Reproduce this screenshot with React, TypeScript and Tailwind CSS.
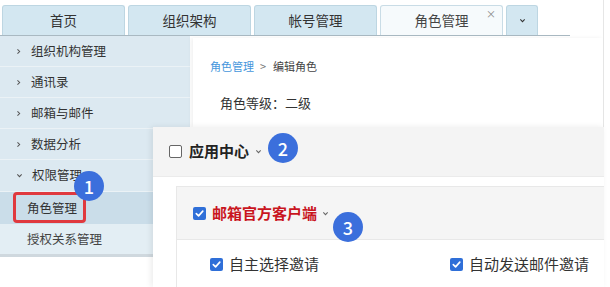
import React from "react";

const Chev = ({ down = false, cls = "" }: { down?: boolean; cls?: string }) => (
  <svg width="7" height="7" viewBox="0 0 8 8" className={cls}>
    {down ? (
      <path d="M1.5 2.8 L4 5.3 L6.5 2.8" fill="none" stroke="currentColor" strokeWidth="1.2" />
    ) : (
      <path d="M2.8 1.5 L5.3 4 L2.8 6.5" fill="none" stroke="currentColor" strokeWidth="1.2" />
    )}
  </svg>
);

const Checked = () => (
  <span className="w-[13px] h-[13px] rounded-[2px] bg-[#2f6fd8] flex items-center justify-center shrink-0">
    <svg width="11" height="11" viewBox="0 0 12 12">
      <path d="M2.5 6.2 L5 8.6 L9.6 3.4" fill="none" stroke="white" strokeWidth="1.8" strokeLinecap="round" strokeLinejoin="round" />
    </svg>
  </span>
);

const Badge = ({ n, cls }: { n: string; cls: string }) => (
  <div
    className={
      "absolute w-[30px] h-[30px] rounded-full bg-[#3b6fdc] text-white text-[18px] font-medium flex items-center justify-center " +
      cls
    }
  >
    {n}
  </div>
);

export default function App() {
  const tabs = ["首页", "组织架构", "帐号管理"];
  const side = ["组织机构管理", "通讯录", "邮箱与邮件", "数据分析"];
  return (
    <div
      className="relative w-[610px] h-[287px] overflow-hidden bg-white text-[#333]"
      style={{ fontFamily: '"Noto Sans CJK SC", "Noto Sans", sans-serif' }}
    >
      <div className="w-[604px] h-full border-r border-[#e6e6e6]">
        {/* tab bar */}
        <div className="w-[570px] h-[36px] pt-[5px] pl-[2px] flex items-stretch gap-[3px] border-b border-[#a9b9c2]">
          {tabs.map((t) => (
            <div
              key={t}
              className="w-[123px] rounded-t-[3px] bg-[#d3e7f1] border border-b-0 border-[#bdd6e2] flex items-center justify-center text-[13.5px] text-[#333]"
            >
              {t}
            </div>
          ))}
          <div className="relative w-[123px] rounded-t-[3px] bg-[#f6fafc] border border-b-0 border-[#c9dce6] flex items-center justify-center text-[13.5px] text-[#444]">
            角色管理
            <span className="absolute right-[6px] top-[0px] text-[10px] text-[#888]">×</span>
          </div>
          <div className="w-[32px] rounded-t-[3px] bg-[#d3e7f1] border border-b-0 border-[#bdd6e2] flex items-center justify-center text-[#333]">
            <Chev down />
          </div>
        </div>

        {/* body */}
        <div className="flex">
          <div className="w-[190px] shrink-0">
            {side.map((s) => (
              <div
                key={s}
                className="h-[31px] bg-[#dce9f1] border-b border-[#ebf2f6] flex items-center pl-[15px] gap-[9px] text-[12.5px] text-[#333]"
              >
                <Chev cls="text-[#555]" />
                {s}
              </div>
            ))}
            <div className="h-[32px] bg-[#dce9f1] border-b border-[#ebf2f6] flex items-center pl-[16px] gap-[9px] text-[12.5px] text-[#333]">
              <Chev down cls="text-[#555]" />
              权限管理
            </div>
            <div className="h-[32px] bg-[#cadde9] flex items-center pl-[27px] text-[12.5px] text-[#333]">
              角色管理
            </div>
            <div className="h-[30px] bg-[#e3eef4] flex items-center pl-[27px] text-[12.5px] text-[#444]">
              授权关系管理
            </div>
            <div className="h-[3px] bg-[#cfd8de]" />
          </div>
          <div className="ml-[3px] mt-[2px] flex-1 h-[89px] bg-white shadow-[-2px_0_4px_rgba(0,0,0,0.06)] pl-[17px]">
            <div className="pt-[20px] flex items-center text-[11px] h-[36px]">
              <span className="text-[#4596dc]">角色管理</span>
              <span className="ml-[6px] text-[#777]">&gt;</span>
              <span className="ml-[7px] text-[#444]">编辑角色</span>
            </div>
            <div className="mt-[19px] pl-[10px] text-[13px] text-[#333]">角色等级：二级</div>
          </div>
        </div>
      </div>

      {/* red highlight */}
      <div className="absolute left-[13px] top-[192px] w-[73px] h-[31px] rounded-[4px] border-[3px] border-[#e0393e]" />

      {/* overlay panel */}
      <div className="absolute left-[153px] top-[127px] w-[451px] h-[160px] bg-white shadow-[-2px_0_6px_rgba(0,0,0,0.08)]">
        <div className="h-[50px] bg-[#f4f4f4] border-b border-[#ebebeb] flex items-center pl-[16px]">
          <span className="w-[13px] h-[13px] border border-[#666] rounded-[2px] bg-white" />
          <span className="ml-[7px] text-[15px] font-bold text-[#222]">应用中心</span>
          <Chev down cls="ml-[6px] text-[#666]" />
        </div>
        <div className="pt-[9px] pl-[23px]">
          <div className="border border-r-0 border-[#e8e8e8]">
            <div className="h-[53px] bg-[#f5f5f5] border-b border-[#e8e8e8] flex items-center pl-[16px]">
              <Checked />
              <span className="ml-[6px] text-[15px] font-bold text-[#c9151e]">邮箱官方客户端</span>
              <Chev down cls="ml-[5px] text-[#666]" />
            </div>
            <div className="h-[48px] flex items-center pl-[33px]">
              <Checked />
              <span className="ml-[6px] text-[15px] text-[#333]">自主选择邀请</span>
              <span className="ml-[131px]">
                <Checked />
              </span>
              <span className="ml-[6px] text-[15px] text-[#333]">自动发送邮件邀请</span>
            </div>
          </div>
        </div>
      </div>

      <Badge n="1" cls="left-[74px] top-[171px]" />
      <Badge n="2" cls="left-[268px] top-[133px]" />
      <Badge n="3" cls="left-[333px] top-[212px]" />
    </div>
  );
}
